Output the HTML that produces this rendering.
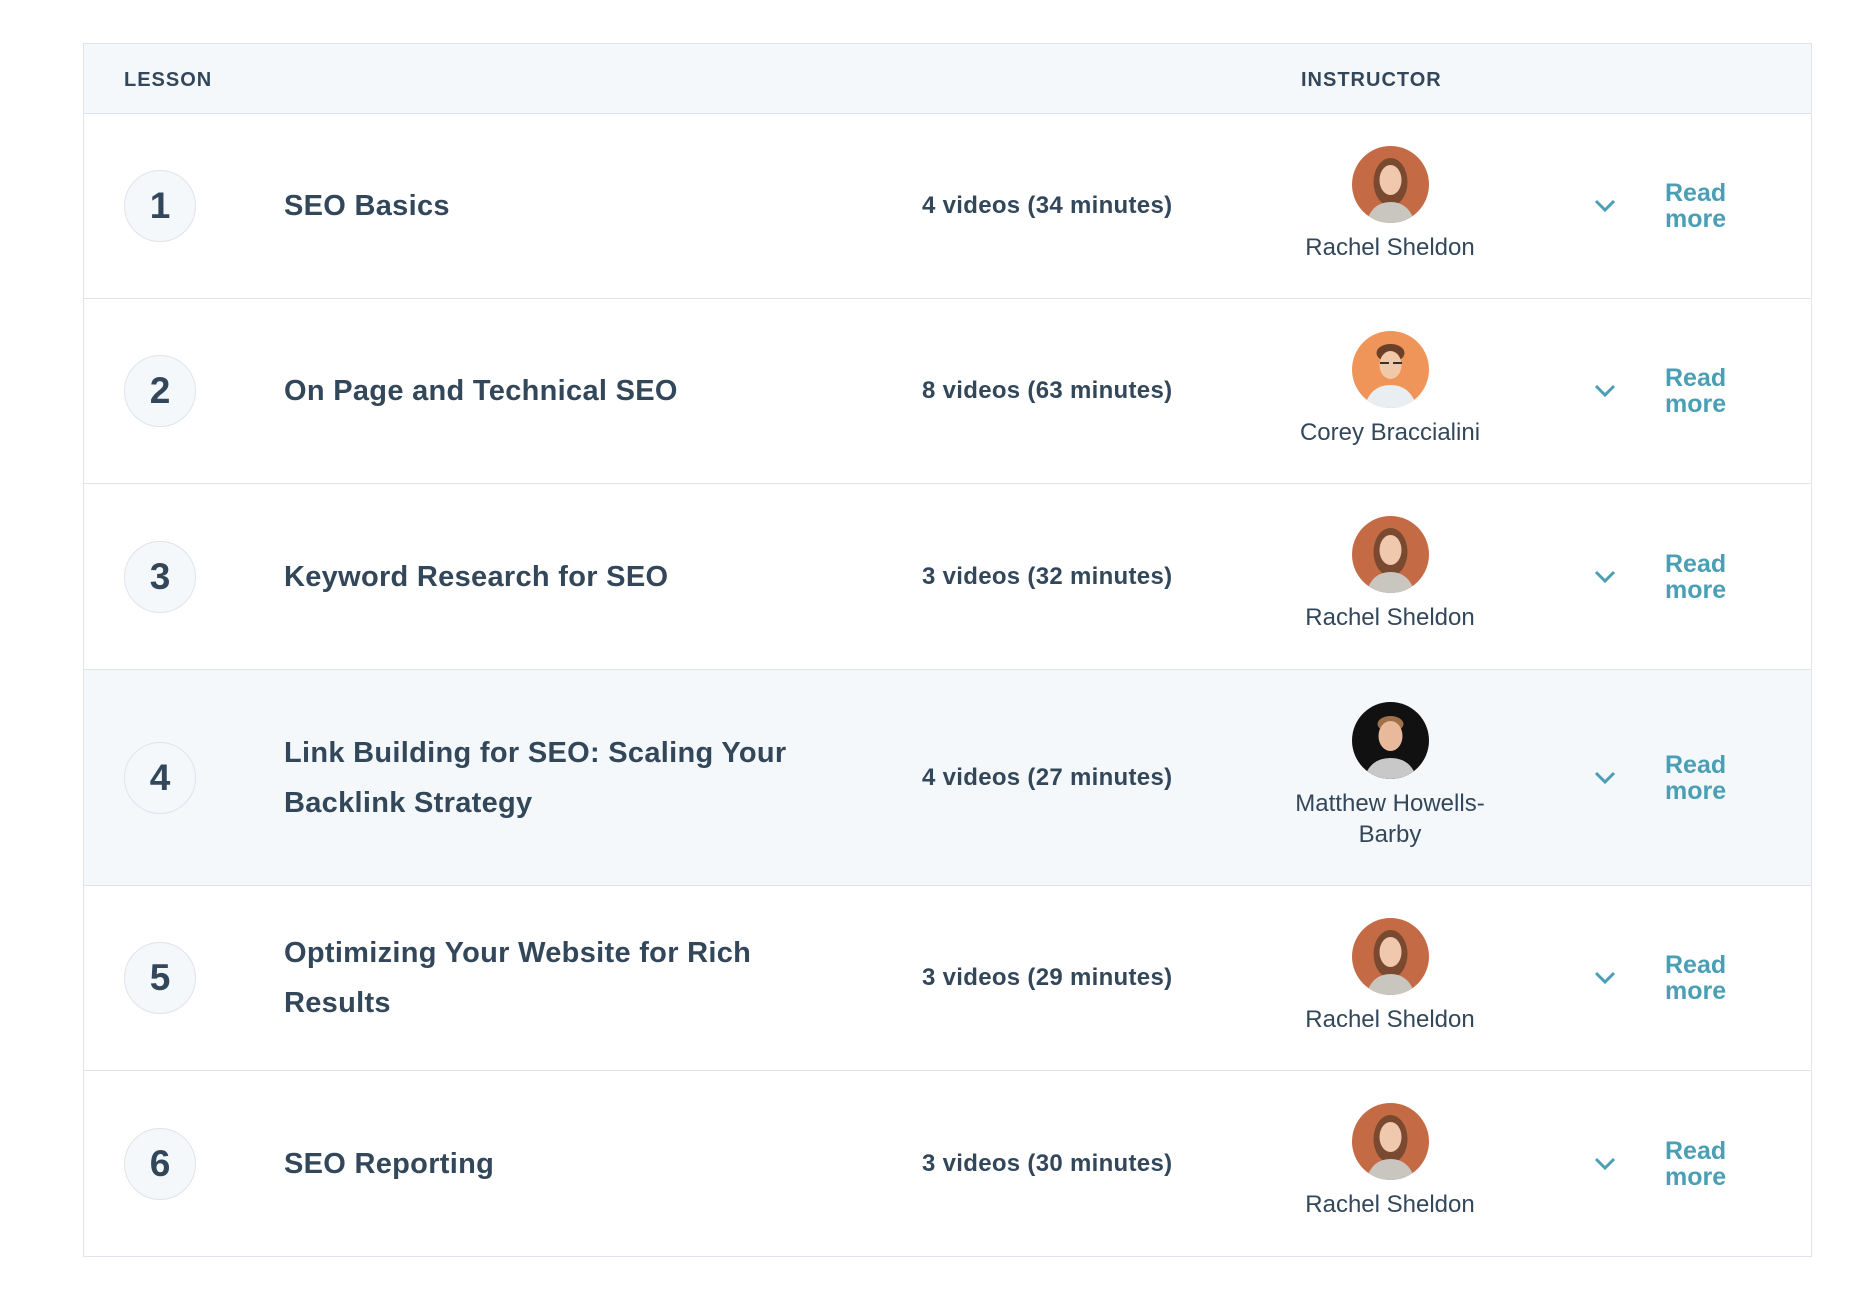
<!DOCTYPE html>
<html><head><meta charset="utf-8">
<style>
*{margin:0;padding:0;box-sizing:border-box}
body{width:1858px;height:1290px;background:#fff;font-family:"Liberation Sans",sans-serif;color:#33475b;position:relative;overflow:hidden}
.table{position:absolute;left:83px;top:43px;width:1729px;border:1px solid #dfe3eb;border-bottom:none}
.hdr{height:70px;background:#f5f8fa;border-bottom:1px solid #dfe3eb;position:relative;font-weight:bold;font-size:20px;letter-spacing:1px}
.hdr span{position:absolute;top:25px}
.row{position:relative;border-bottom:1px solid #dfe3eb;background:#fff}
.row.alt{background:#f5f8fa}
.num{position:absolute;left:40px;width:72px;height:72px;border-radius:50%;border:1px solid #dfe3eb;background:#f5f8fa;font-size:37px;font-weight:bold;display:flex;align-items:center;justify-content:center;transform:translateY(-50%);top:50%}
.title{position:absolute;left:200px;font-size:29px;font-weight:bold;line-height:50px;top:50%;transform:translateY(-50%);letter-spacing:0.3px}
.vid{position:absolute;left:838px;font-size:24px;font-weight:bold;top:50%;transform:translateY(-50%);letter-spacing:0.3px}
.inst{position:absolute;left:1191px;width:230px;text-align:center;top:32px}
.inst svg{display:block;margin:0 auto}
.inst .nm{font-size:24px;line-height:31px;margin-top:9px}
.chev{position:absolute;left:1510px;top:50%;transform:translateY(-50%)}
.rm{position:absolute;left:1581px;top:50%;transform:translateY(-50%);color:#4a9fb5;font-weight:bold;font-size:25px;line-height:26px}
</style></head><body>
<div class="table">
<div class="hdr"><span style="left:40px">LESSON</span><span style="left:1217px">INSTRUCTOR</span></div>

<div class="row" style="height:185px">
<div class="num">1</div><div class="title">SEO Basics</div><div class="vid">4 videos (34 minutes)</div>
<div class="inst"><svg width="77" height="77"><defs><clipPath id="c1"><circle cx="38.5" cy="38.5" r="38.5"/></clipPath></defs><g clip-path="url(#c1)"><rect width="77" height="77" fill="#c46b46"/><ellipse cx="38.5" cy="36" rx="17" ry="24" fill="#7a4a30"/><ellipse cx="38.5" cy="34" rx="11" ry="15" fill="#f0c8ad"/><path d="M14 77 Q20 56 38.5 56 Q57 56 63 77Z" fill="#c9c6c0"/></g></svg><div class="nm">Rachel Sheldon</div></div>
<svg class="chev" width="22" height="14"><path d="M2 2 L11 11 L20 2" stroke="#4a9fb5" stroke-width="3" fill="none"/></svg>
<div class="rm">Read<br>more</div></div>

<div class="row" style="height:185px">
<div class="num">2</div><div class="title">On Page and Technical SEO</div><div class="vid">8 videos (63 minutes)</div>
<div class="inst"><svg width="77" height="77"><defs><clipPath id="c2"><circle cx="38.5" cy="38.5" r="38.5"/></clipPath></defs><g clip-path="url(#c2)"><rect width="77" height="77" fill="#f0955a"/><ellipse cx="38.5" cy="22" rx="14" ry="9" fill="#6b4028"/><ellipse cx="38.5" cy="34" rx="11" ry="14" fill="#f2c9a8"/><path d="M28 32 h9 M41 32 h9" stroke="#333" stroke-width="2"/><path d="M12 77 Q18 54 38.5 54 Q59 54 65 77Z" fill="#e9eef2"/></g></svg><div class="nm">Corey Braccialini</div></div>
<svg class="chev" width="22" height="14"><path d="M2 2 L11 11 L20 2" stroke="#4a9fb5" stroke-width="3" fill="none"/></svg>
<div class="rm">Read<br>more</div></div>

<div class="row" style="height:186px">
<div class="num">3</div><div class="title">Keyword Research for SEO</div><div class="vid">3 videos (32 minutes)</div>
<div class="inst"><svg width="77" height="77"><defs><clipPath id="c3"><circle cx="38.5" cy="38.5" r="38.5"/></clipPath></defs><g clip-path="url(#c3)"><rect width="77" height="77" fill="#c46b46"/><ellipse cx="38.5" cy="36" rx="17" ry="24" fill="#7a4a30"/><ellipse cx="38.5" cy="34" rx="11" ry="15" fill="#f0c8ad"/><path d="M14 77 Q20 56 38.5 56 Q57 56 63 77Z" fill="#c9c6c0"/></g></svg><div class="nm">Rachel Sheldon</div></div>
<svg class="chev" width="22" height="14"><path d="M2 2 L11 11 L20 2" stroke="#4a9fb5" stroke-width="3" fill="none"/></svg>
<div class="rm">Read<br>more</div></div>

<div class="row alt" style="height:216px">
<div class="num">4</div><div class="title">Link Building for SEO: Scaling Your<br>Backlink Strategy</div><div class="vid">4 videos (27 minutes)</div>
<div class="inst"><svg width="77" height="77"><defs><clipPath id="c4"><circle cx="38.5" cy="38.5" r="38.5"/></clipPath></defs><g clip-path="url(#c4)"><rect width="77" height="77" fill="#111"/><ellipse cx="38.5" cy="22" rx="13" ry="8" fill="#a0704a"/><ellipse cx="38.5" cy="34" rx="12" ry="15" fill="#e8b99a"/><path d="M12 77 Q18 56 38.5 56 Q59 56 65 77Z" fill="#c8c8c8"/></g></svg><div class="nm">Matthew Howells-<br>Barby</div></div>
<svg class="chev" width="22" height="14"><path d="M2 2 L11 11 L20 2" stroke="#4a9fb5" stroke-width="3" fill="none"/></svg>
<div class="rm">Read<br>more</div></div>

<div class="row" style="height:185px">
<div class="num">5</div><div class="title">Optimizing Your Website for Rich<br>Results</div><div class="vid">3 videos (29 minutes)</div>
<div class="inst"><svg width="77" height="77"><defs><clipPath id="c5"><circle cx="38.5" cy="38.5" r="38.5"/></clipPath></defs><g clip-path="url(#c5)"><rect width="77" height="77" fill="#c46b46"/><ellipse cx="38.5" cy="36" rx="17" ry="24" fill="#7a4a30"/><ellipse cx="38.5" cy="34" rx="11" ry="15" fill="#f0c8ad"/><path d="M14 77 Q20 56 38.5 56 Q57 56 63 77Z" fill="#c9c6c0"/></g></svg><div class="nm">Rachel Sheldon</div></div>
<svg class="chev" width="22" height="14"><path d="M2 2 L11 11 L20 2" stroke="#4a9fb5" stroke-width="3" fill="none"/></svg>
<div class="rm">Read<br>more</div></div>

<div class="row" style="height:186px">
<div class="num">6</div><div class="title">SEO Reporting</div><div class="vid">3 videos (30 minutes)</div>
<div class="inst"><svg width="77" height="77"><defs><clipPath id="c6"><circle cx="38.5" cy="38.5" r="38.5"/></clipPath></defs><g clip-path="url(#c6)"><rect width="77" height="77" fill="#c46b46"/><ellipse cx="38.5" cy="36" rx="17" ry="24" fill="#7a4a30"/><ellipse cx="38.5" cy="34" rx="11" ry="15" fill="#f0c8ad"/><path d="M14 77 Q20 56 38.5 56 Q57 56 63 77Z" fill="#c9c6c0"/></g></svg><div class="nm">Rachel Sheldon</div></div>
<svg class="chev" width="22" height="14"><path d="M2 2 L11 11 L20 2" stroke="#4a9fb5" stroke-width="3" fill="none"/></svg>
<div class="rm">Read<br>more</div></div>
</div>
</body></html>
